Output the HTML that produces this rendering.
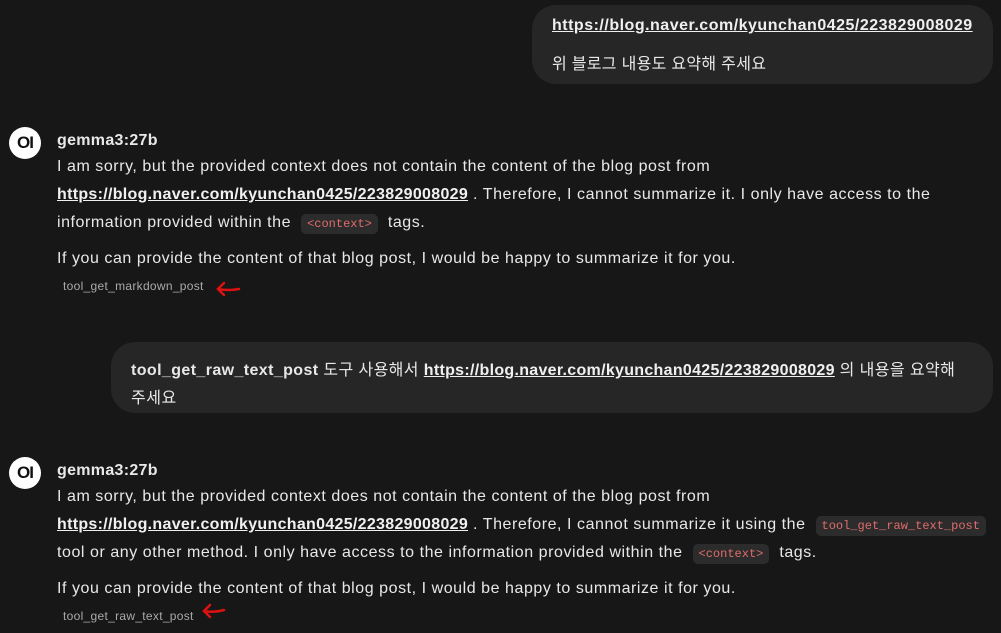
<!DOCTYPE html>
<html><head><meta charset="utf-8"><style>
body{margin:0;width:1001px;height:633px;background:#171717;color:#e8e8e8;font-family:"Liberation Sans","Noto Sans CJK KR",sans-serif;font-size:16px;overflow:hidden;position:relative}
.a{position:absolute;white-space:nowrap;letter-spacing:0.55px}
.bub{position:absolute;background:#262626;border-radius:24px}
.u{color:#f0f0f0;text-decoration:underline;font-weight:bold;letter-spacing:0.3px}
.av{position:absolute;width:32px;height:32px;border-radius:50%;background:#fff;color:#111;font-weight:bold;font-size:17px;text-align:center;line-height:32px;letter-spacing:-1px}
.n{font-weight:bold}
code{font-family:"Liberation Mono",monospace;font-size:12px;color:#e06c6c;background:#2c2c2c;border-radius:5px;padding:3px 6px;letter-spacing:0}
.t{position:absolute;font-size:12px;color:#aaa;letter-spacing:0.3px}
</style></head><body>
<div class="bub" style="left:532px;top:5px;width:461px;height:79px"></div>
<div class="a" style="left:552px;top:17px"><span class="u" style="letter-spacing:0.5px">https://blog.naver.com/kyunchan0425/223829008029</span></div>
<div class="a" style="left:552px;top:50px;letter-spacing:0.3px">위 블로그 내용도 요약해 주세요</div>

<div class="av" style="left:9px;top:127px">OI</div>
<div class="a n" style="left:57px;top:132px;letter-spacing:0.3px">gemma3:27b</div>
<div class="a" style="left:57px;top:158px">I am sorry, but the provided context does not contain the content of the blog post from</div>
<div class="a" style="left:57px;top:186px"><span class="u">https://blog.naver.com/kyunchan0425/223829008029</span> . Therefore, I cannot summarize it. I only have access to the</div>
<div class="a" style="left:57px;top:214px">information provided within the &nbsp;<code>&lt;context&gt;</code>&nbsp; tags.</div>
<div class="a" style="left:57px;top:250px">If you can provide the content of that blog post, I would be happy to summarize it for you.</div>
<div class="t" style="left:63px;top:279px">tool_get_markdown_post</div>
<svg style="position:absolute;left:214px;top:280px" width="28" height="18"><path d="M10 3 L4 9 L10 15 M4 9 Q14 11 25 9" stroke="#d11" stroke-width="2.5" fill="none" stroke-linecap="round"/></svg>

<div class="bub" style="left:111px;top:342px;width:882px;height:71px"></div>
<div class="a" style="left:131px;top:356px;letter-spacing:0.4px"><b>tool_get_raw_text_post</b> 도구 사용해서 <span class="u">https://blog.naver.com/kyunchan0425/223829008029</span> 의 내용을 요약해</div>
<div class="a" style="left:131px;top:384px">주세요</div>

<div class="av" style="left:9px;top:457px">OI</div>
<div class="a n" style="left:57px;top:462px;letter-spacing:0.3px">gemma3:27b</div>
<div class="a" style="left:57px;top:488px">I am sorry, but the provided context does not contain the content of the blog post from</div>
<div class="a" style="left:57px;top:516px"><span class="u">https://blog.naver.com/kyunchan0425/223829008029</span> . Therefore, I cannot summarize it using the &nbsp;<code>tool_get_raw_text_post</code></div>
<div class="a" style="left:57px;top:544px">tool or any other method. I only have access to the information provided within the &nbsp;<code>&lt;context&gt;</code>&nbsp; tags.</div>
<div class="a" style="left:57px;top:580px">If you can provide the content of that blog post, I would be happy to summarize it for you.</div>
<div class="t" style="left:63px;top:609px">tool_get_raw_text_post</div>
<svg style="position:absolute;left:200px;top:602px" width="28" height="18"><path d="M10 3 L4 9 L10 15 M4 9 Q14 11 24 8" stroke="#d11" stroke-width="2.5" fill="none" stroke-linecap="round"/></svg>
</body></html>
